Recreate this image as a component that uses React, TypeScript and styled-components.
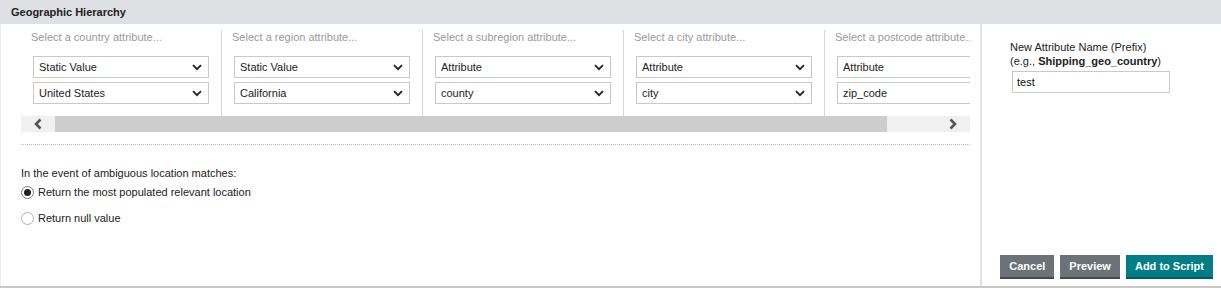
import React from 'react';
import styled, { createGlobalStyle } from 'styled-components';

interface IColumn {
  id: number;
  label: string;
  kind: string;
  value: string;
}

const GlobalStyle = createGlobalStyle`
  html, body {
    margin: 0;
    padding: 0;
    background: #ffffff;
  }
  body {
    font-family: 'Liberation Sans', Arial, sans-serif;
    font-size: 11px;
    color: #333333;
  }
  * {
    box-sizing: border-box;
  }
`;

const Wrapper = styled.div`
  width: 1221px;
  height: 288px;
  display: flex;
  flex-direction: column;
  overflow: hidden;
`;

const Header = styled.div`
  height: 24px;
  padding-left: 11px;
  display: flex;
  align-items: center;
  background-color: #dfe0e3;
  font-weight: 700;
  font-size: 11px;
  color: #222222;
`;

const Body = styled.div`
  flex: 1;
  display: flex;
  border-bottom: 2px solid #c8c8c8;
`;

const LeftPanel = styled.div`
  width: 982px;
  flex-shrink: 0;
  padding: 6px 10px 0 20px;
  border-left: 1px solid #ececec;
  border-right: 2px solid #e2e2e2;
  display: flex;
  flex-direction: column;
`;

const Viewport = styled.div`
  width: 949px;
  overflow: hidden;
`;

const Columns = styled.div`
  display: flex;
  width: max-content;
`;

const Column = styled.div`
  width: 201px;
  padding-bottom: 12px;
  border-right: 1px solid #d6d6d6;
  display: flex;
  flex-direction: column;
  gap: 4px;
`;

const ColumnLabel = styled.div`
  height: 14px;
  line-height: 14px;
  padding-left: 10px;
  margin-bottom: 8px;
  color: #9a9a9a;
  white-space: nowrap;
  overflow: hidden;
`;

const SelectBox = styled.div`
  margin-left: 12px;
  width: 176px;
  height: 22px;
  padding: 0 6px 0 5px;
  border: 1px solid #c9c9c9;
  background: #ffffff;
  display: flex;
  align-items: center;
  justify-content: space-between;
  color: #222222;
`;

const Scrollbar = styled.div`
  height: 16px;
  width: 949px;
  display: flex;
  background-color: #f0f0f0;
`;

const ArrowButton = styled.div`
  width: 34px;
  height: 16px;
  display: flex;
  align-items: center;
  justify-content: center;
`;

const Track = styled.div`
  flex: 1;
  display: flex;
`;

const Thumb = styled.div<{ $width: number }>`
  width: ${(p) => p.$width}px;
  height: 16px;
  background-color: #cdcdcd;
`;

const DottedRule = styled.div`
  width: 949px;
  margin-top: 12px;
  border-top: 1px dotted #bdbdbd;
`;

const Question = styled.div`
  margin-top: 21px;
  line-height: 14px;
  color: #222222;
`;

const RadioRow = styled.label<{ $top: number }>`
  display: flex;
  align-items: center;
  gap: 4px;
  height: 14px;
  margin-top: ${(p) => p.$top}px;
  color: #222222;
`;

const RadioCircle = styled.span<{ $checked?: boolean }>`
  width: 13px;
  height: 13px;
  border-radius: 50%;
  border: 1px solid ${(p) => (p.$checked ? '#7a7a7a' : '#b3b3b3')};
  background: #ffffff;
  display: flex;
  align-items: center;
  justify-content: center;

  &::after {
    content: '';
    width: 7px;
    height: 7px;
    border-radius: 50%;
    background: ${(p) => (p.$checked ? '#222222' : 'transparent')};
  }
`;

const RightPanel = styled.div`
  flex: 1;
  min-width: 0;
  padding: 16px 8px 7px 28px;
  display: flex;
  flex-direction: column;
`;

const FieldLabel = styled.div`
  line-height: 14px;
  color: #222222;
  white-space: nowrap;

  b {
    font-weight: 700;
  }
`;

const TextInput = styled.div`
  margin: 3px 0 0 2px;
  width: 158px;
  height: 22px;
  padding-left: 4px;
  border: 1px solid #c9c9c9;
  display: flex;
  align-items: center;
  color: #111111;
`;

const Actions = styled.div`
  margin-top: auto;
  display: flex;
  justify-content: flex-end;
  gap: 6px;
`;

const Button = styled.button<{ $primary?: boolean }>`
  flex-shrink: 0;
  height: 24px;
  padding: 0 9px;
  border: none;
  border-bottom: 2px solid ${(p) => (p.$primary ? '#035a60' : '#45494d')};
  background-color: ${(p) => (p.$primary ? '#007d86' : '#6c7278')};
  color: #ffffff;
  font-family: 'Liberation Sans', Arial, sans-serif;
  font-size: 11px;
  font-weight: 700;
  white-space: nowrap;
  cursor: pointer;
`;

function Chevron() {
  return (
    <svg width="10" height="7" viewBox="0 0 10 7">
      <path d="M1 1.2 L5 5.2 L9 1.2" fill="none" stroke="#222" strokeWidth="1.8" />
    </svg>
  );
}

function ScrollArrow({ dir }: { dir: 'left' | 'right' }) {
  return (
    <svg width="10" height="12" viewBox="0 0 10 12">
      <path
        d={dir === 'left' ? 'M7.5 1.5 L3 6 L7.5 10.5' : 'M2.5 1.5 L7 6 L2.5 10.5'}
        fill="none"
        stroke="#555"
        strokeWidth="2.6"
      />
    </svg>
  );
}

const columns: IColumn[] = [
  { id: 1, label: 'Select a country attribute...', kind: 'Static Value', value: 'United States' },
  { id: 2, label: 'Select a region attribute...', kind: 'Static Value', value: 'California' },
  { id: 3, label: 'Select a subregion attribute...', kind: 'Attribute', value: 'county' },
  { id: 4, label: 'Select a city attribute...', kind: 'Attribute', value: 'city' },
  { id: 5, label: 'Select a postcode attribute...', kind: 'Attribute', value: 'zip_code' },
];

function AttributeColumn({ column }: { column: IColumn }) {
  return (
    <Column>
      <ColumnLabel>{column.label}</ColumnLabel>
      <SelectBox>
        <span>{column.kind}</span>
        <Chevron />
      </SelectBox>
      <SelectBox>
        <span>{column.value}</span>
        <Chevron />
      </SelectBox>
    </Column>
  );
}

export default function App() {
  return (
    <Wrapper>
      <GlobalStyle />
      <Header>Geographic Hierarchy</Header>
      <Body>
        <LeftPanel>
          <Viewport>
            <Columns>
              {columns.map((c) => (
                <AttributeColumn key={c.id} column={c} />
              ))}
            </Columns>
          </Viewport>
          <Scrollbar>
            <ArrowButton>
              <ScrollArrow dir="left" />
            </ArrowButton>
            <Track>
              <Thumb $width={832} />
            </Track>
            <ArrowButton>
              <ScrollArrow dir="right" />
            </ArrowButton>
          </Scrollbar>
          <DottedRule />
          <Question>In the event of ambiguous location matches:</Question>
          <RadioRow $top={5}>
            <RadioCircle $checked />
            Return the most populated relevant location
          </RadioRow>
          <RadioRow $top={12}>
            <RadioCircle />
            Return null value
          </RadioRow>
        </LeftPanel>
        <RightPanel>
          <FieldLabel>New Attribute Name (Prefix)</FieldLabel>
          <FieldLabel>
            (e.g., <b>Shipping_geo_country</b>)
          </FieldLabel>
          <TextInput>test</TextInput>
          <Actions>
            <Button type="button">Cancel</Button>
            <Button type="button">Preview</Button>
            <Button type="button" $primary>
              Add to Script
            </Button>
          </Actions>
        </RightPanel>
      </Body>
    </Wrapper>
  );
}
